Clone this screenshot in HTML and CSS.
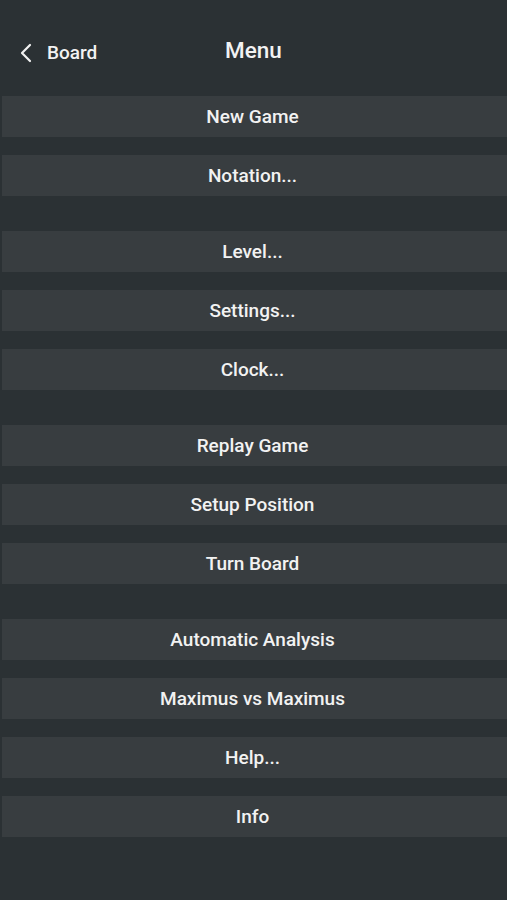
FILE: index.html
```
<!DOCTYPE html>
<html lang="en">
<head>
  <meta charset="UTF-8">
  <meta name="viewport" content="width=device-width, initial-scale=1">
  <title>Menu</title>
  <link rel="stylesheet" href="styles.css">
</head>
<body>

<header class="topbar">
  <button class="back-btn">
    <svg width="12" height="20" viewBox="0 0 12 20"><path d="M10 2 L2 10 L10 18" fill="none" stroke="#f2f2f2" stroke-width="2.2" stroke-linecap="round" stroke-linejoin="round"/></svg>
    <span>Board</span>
  </button>
  <h1 class="title">Menu</h1>
</header>

<!-- Menu groups -->
<nav class="menu">
  <div class="group">
    <button class="item">New Game</button>
    <button class="item">Notation...</button>
  </div>
  <div class="group">
    <button class="item">Level...</button>
    <button class="item">Settings...</button>
    <button class="item">Clock...</button>
  </div>
  <div class="group">
    <button class="item">Replay Game</button>
    <button class="item">Setup Position</button>
    <button class="item">Turn Board</button>
  </div>
  <div class="group">
    <button class="item">Automatic Analysis</button>
    <button class="item">Maximus vs Maximus</button>
    <button class="item">Help...</button>
    <button class="item">Info</button>
  </div>
</nav>

</body>
</html>
```
FILE: styles.css
```
body {
  margin: 0;
  background: #2b3134;
  font-family: Roboto, 'Noto Sans', sans-serif;
  color: #f2f2f2;
  height: 900px;
}
.topbar {
  position: relative;
  height: 96px;
}
.back-btn {
  position: absolute;
  left: 20px;
  top: 41px;
  display: flex;
  align-items: center;
  gap: 15px;
  background: none;
  border: none;
  padding: 0;
  color: #f2f2f2;
  font-family: inherit;
  font-size: 19px;
  font-weight: 500;
}
.title {
  margin: 0;
  padding-top: 37px;
  text-align: center;
  font-size: 22.5px;
  font-weight: 500;
}
.menu {
  display: flex;
  flex-direction: column;
  gap: 35px;
  padding-left: 2px;
}
.group {
  display: flex;
  flex-direction: column;
  gap: 18px;
}
.item {
  height: 41px;
  padding: 0 4px 0 0;
  background: #383d40;
  border: none;
  color: #f2f2f2;
  font-family: inherit;
  font-size: 19px;
  font-weight: 500;
  cursor: pointer;
}
```
